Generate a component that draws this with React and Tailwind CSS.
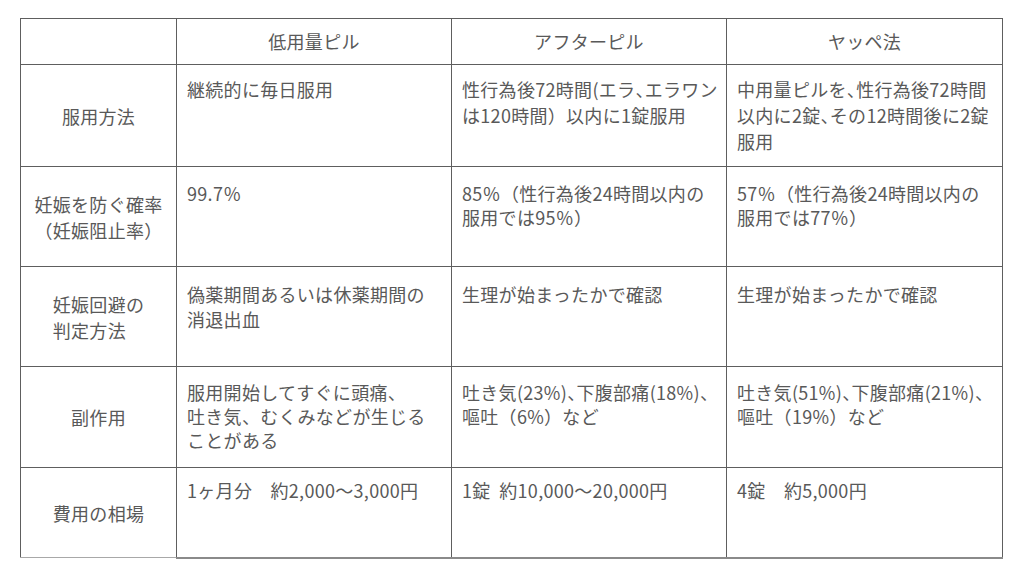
const halt = "[font-feature-settings:'halt']"

const rows = [
  {
    h: 'h-[102px]',
    pad: 'pt-[11px]',
    lead: 'leading-[26px]',
    label: ['服用方法'],
    cells: [
      ['継続的に毎日服用'],
      [
        <>性行為後72時間(エラ<span className={halt}>、</span>エラワン</>,
        'は120時間）以内に1錠服用',
      ],
      [
        <>中用量ピルを<span className={halt}>、</span>性行為後72時間</>,
        <>以内に2錠<span className={halt}>、</span>その12時間後に2錠</>,
        '服用',
      ],
    ],
  },
  {
    h: 'h-[100px]',
    pad: 'pt-[14px]',
    lead: 'leading-[24px]',
    label: ['妊娠を防ぐ確率', '（妊娠阻止率）'],
    cells: [['99.7％'], ['85％（性行為後24時間以内の', '服用では95％）'], ['57％（性行為後24時間以内の', '服用では77％）']],
  },
  {
    h: 'h-[100px]',
    pad: 'pt-[15px]',
    lead: 'leading-[25px]',
    label: ['妊娠回避の', '判定方法'],
    labelLeft: true,
    cells: [['偽薬期間あるいは休薬期間の', '消退出血'], ['生理が始まったかで確認'], ['生理が始まったかで確認']],
  },
  {
    h: 'h-[101px]',
    pad: 'pt-[13px]',
    lead: 'leading-[24px]',
    label: ['副作用'],
    cells: [
      ['服用開始してすぐに頭痛、', '吐き気、むくみなどが生じる', 'ことがある'],
      [
        <>吐き気(23%)<span className={halt}>、</span>下腹部痛(18%)<span className={halt}>、</span></>,
        '嘔吐（6%）など',
      ],
      [
        <>吐き気(51%)<span className={halt}>、</span>下腹部痛(21%)<span className={halt}>、</span></>,
        '嘔吐（19%）など',
      ],
    ],
  },
  {
    h: 'h-[90px]',
    pad: 'pt-[10px]',
    lead: 'leading-[24px]',
    label: ['費用の相場'],
    last: true,
    cells: [['1ヶ月分　約2,000〜3,000円'], ['1錠\u00a0\u00a0約10,000〜20,000円'], ['4錠　約5,000円']],
  },
]

function Lines({ lines }) {
  return lines.map((line, i) => (
    <div key={i} className="whitespace-nowrap">
      {line}
    </div>
  ))
}

export default function App() {
  return (
    <div
      className="h-[576px] w-[1024px] overflow-hidden bg-white pl-[20px] pt-[18px] text-[18px] tracking-[0.3px] text-[#595959]"
      style={{ fontFamily: '"Noto Sans CJK JP", "Noto Sans", sans-serif' }}
    >
      <table className="w-[982px] table-fixed border-collapse">
        <colgroup>
          <col className="w-[156px]" />
          <col className="w-[275px]" />
          <col className="w-[275px]" />
          <col className="w-[276px]" />
        </colgroup>
        <thead>
          <tr className="h-[46px]">
            <th className="border border-[#5e5e5e]" />
            <th className="border border-[#5e5e5e] text-center font-normal">低用量ピル</th>
            <th className="border border-[#5e5e5e] text-center font-normal">アフターピル</th>
            <th className="border border-[#5e5e5e] text-center font-normal">ヤッペ法</th>
          </tr>
        </thead>
        <tbody>
          {rows.map((row, r) => (
            <tr key={r} className={row.h}>
              <td
                className={`border border-[#5e5e5e] text-center align-middle leading-[26px] ${
                  row.last ? 'border-b-[#a8a8a8]' : ''
                }`}
              >
                <div className={row.labelLeft ? 'inline-block text-left' : ''}>
                  <Lines lines={row.label} />
                </div>
              </td>
              {row.cells.map((cell, c) => (
                <td
                  key={c}
                  className={`border border-[#5e5e5e] px-[10px] align-top ${row.pad} ${row.lead} ${
                    row.last ? 'border-b-2 border-b-[#8a8a8a]' : ''
                  }`}
                >
                  <Lines lines={cell} />
                </td>
              ))}
            </tr>
          ))}
        </tbody>
      </table>
    </div>
  )
}
